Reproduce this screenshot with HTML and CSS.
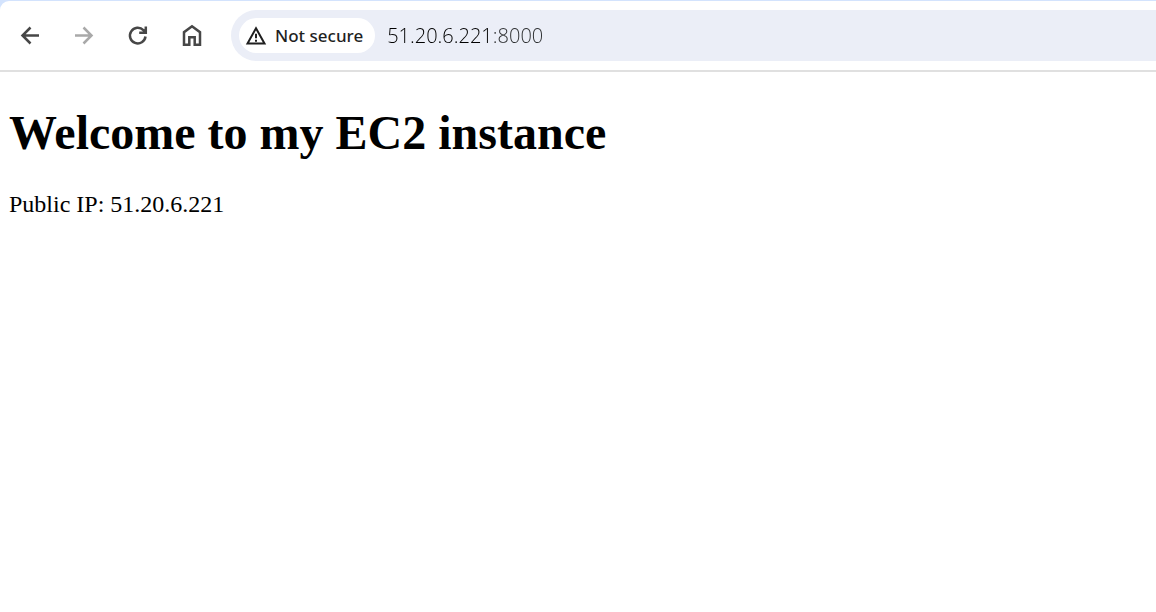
FILE: index.html
```html
<!DOCTYPE html>
<html lang="en">
<head>
  <meta charset="utf-8">
  <title>Welcome to my EC2 instance</title>
  <link rel="stylesheet" href="styles.css">
</head>
<body>
  <header class="browser">
    <nav class="toolbar" aria-label="Browser toolbar">
      <div class="nav-buttons">
        <button class="icon-button" type="button" aria-label="Back">
          <svg class="icon" viewBox="0 0 24 24"><path d="M21 11.500H4M12.500 3.500L4.500 11.500l8 8"/></svg>
        </button>
        <button class="icon-button" type="button" aria-label="Forward" disabled>
          <svg class="icon" viewBox="0 0 24 24"><path d="M3 11.500h17M11.500 3.500l8 8-8 8"/></svg>
        </button>
        <button class="icon-button" type="button" aria-label="Reload">
          <svg class="icon" viewBox="0 0 24 24"><path d="M19.500 12.500A7.800 7.800 0 1 1 17.400 6.200L19 8M19.800 2.500v6.300H13.200"/></svg>
        </button>
        <button class="icon-button" type="button" aria-label="Home">
          <svg class="icon" viewBox="0 0 24 24"><path d="M4 20.700V8.200L12 2.200l8 6v12.500h-5.300v-7.500H9.300v7.500z"/></svg>
        </button>
      </div>
      <div class="address-bar">
        <button class="security-chip" type="button">
          <svg class="warning" viewBox="0 0 22 20"><path class="warning-outline" d="M11 2.200L19.500 17.500h-17z"/><path class="warning-mark" d="M11 7.800v4.400M11 13.800v2"/></svg>
          <span>Not secure</span>
        </button>
        <input class="url" type="text" aria-label="Address" value="51.20.6.221:8000" spellcheck="false">
      </div>
    </nav>
  </header>
  <main class="page">
    <h1 class="title">Welcome to my EC2 instance</h1>
    <p class="text">Public IP: 51.20.6.221</p>
  </main>
</body>
</html>
```
FILE: styles.css
```css
* {
  box-sizing: border-box;
}

body {
  margin: 0;
  background: #fff;
  color: #000;
  font-family: "Liberation Serif", "Times New Roman", serif;
}

.browser {
  padding-top: 1px;
  background: #d3e3fd;
}

.toolbar {
  display: flex;
  align-items: center;
  gap: 12px;
  padding: 9px 0 9px 3px;
  border-bottom: 2px solid #e0e0e0;
  border-top-left-radius: 9px;
  background: #fff;
}

.nav-buttons {
  display: flex;
}

.icon-button {
  display: flex;
  align-items: center;
  justify-content: center;
  width: 54px;
  height: 48px;
  padding: 0;
  border: 0;
  background: none;
  color: #474747;
}

.icon-button:disabled {
  color: #a9a9a9;
}

.icon {
  width: 24px;
  height: 24px;
  fill: none;
  stroke: currentColor;
  stroke-width: 2.5;
}

.address-bar {
  display: flex;
  flex: 1;
  align-items: center;
  gap: 12px;
  min-width: 0;
  padding: 8px;
  padding-right: 0;
  border-radius: 26px 0 0 26px;
  background: #ebeef7;
}

.security-chip {
  display: flex;
  flex: none;
  align-items: center;
  gap: 8px;
  height: 35px;
  padding: 0 12px 0 6px;
  border: 0;
  border-radius: 18px;
  background: #fff;
  color: #1f1f1f;
  font: 500 17px/24px "Noto Sans", "Open Sans", sans-serif;
}

.warning {
  width: 22px;
  height: 20px;
  fill: none;
  stroke: currentColor;
  stroke-width: 2;
}

.url {
  flex: 1;
  min-width: 0;
  padding: 0;
  border: 0;
  outline: 0;
  background: linear-gradient(to right, #000 106px, #2c2e30 106px);
  background-clip: text;
  color: transparent;
  caret-color: #1f1f1f;
  font: 300 20px/28px "Open Sans", "Noto Sans", sans-serif;
}

.page {
  padding: 33px 9px;
}

.title {
  margin: 0;
  font-size: 48px;
  line-height: 56px;
}

.text {
  margin: 29px 0 0;
  font-size: 24px;
  line-height: 28px;
}
```
